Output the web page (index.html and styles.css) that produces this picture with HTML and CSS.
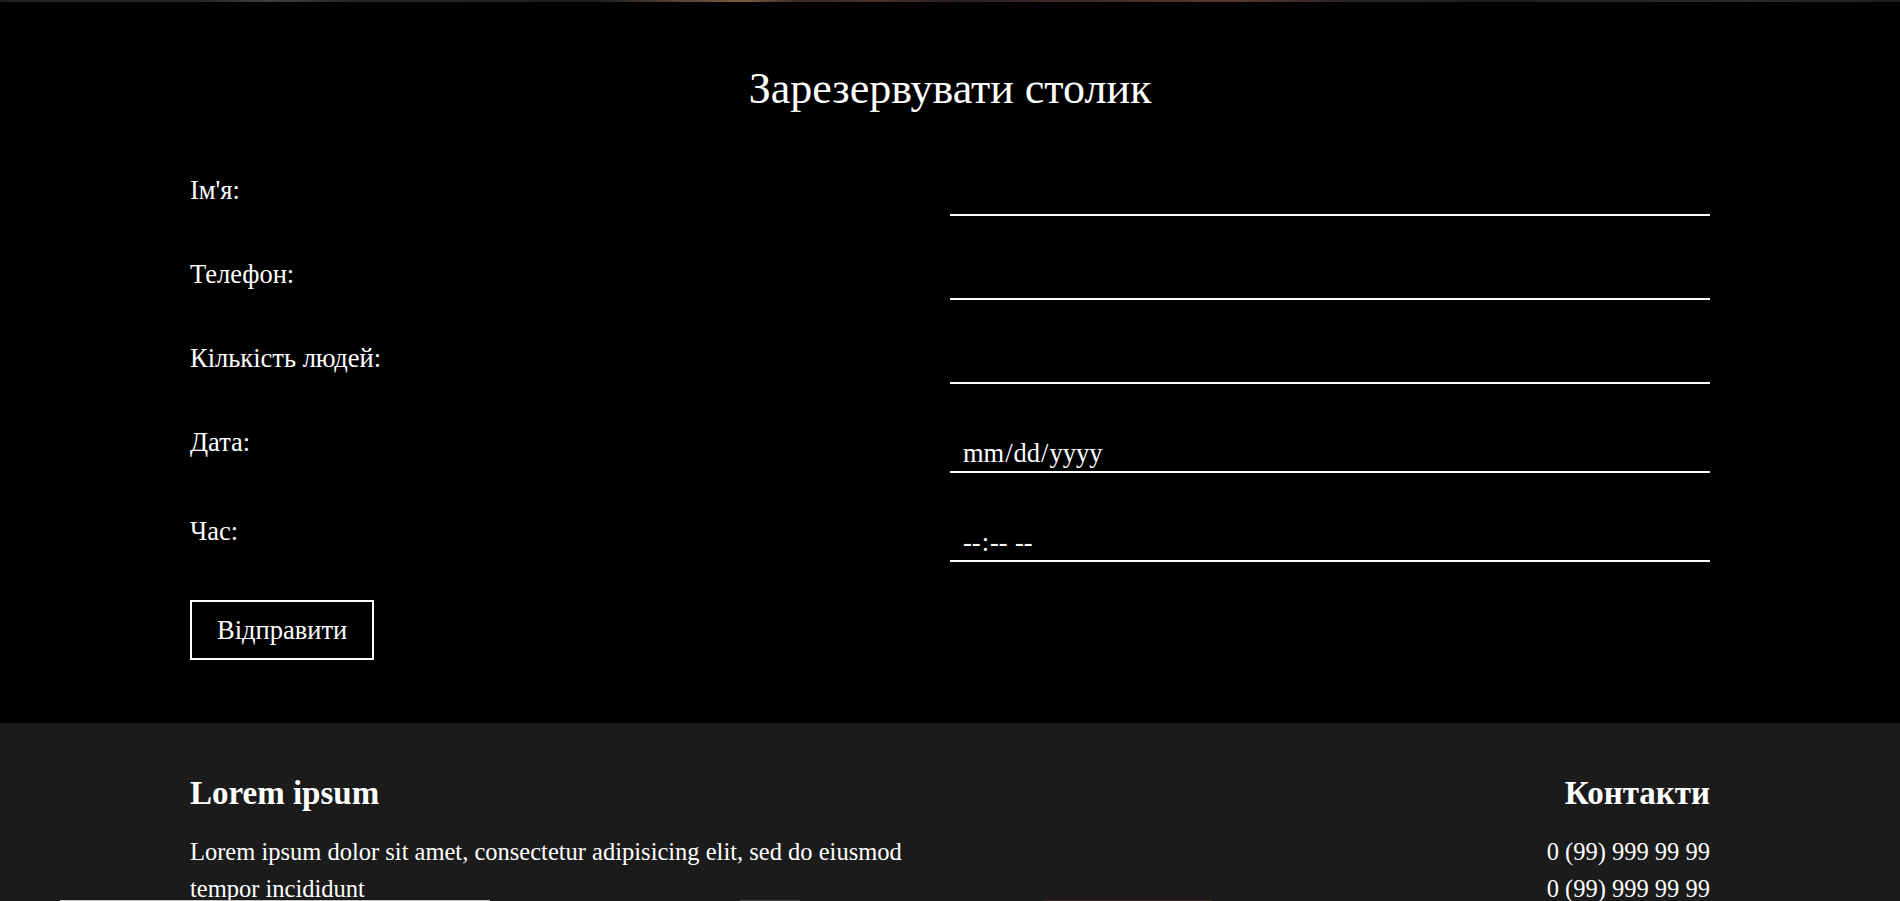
FILE: index.html
```html
<!DOCTYPE html>
<html lang="uk">
<head>
<meta charset="utf-8">
<title>Зарезервувати столик</title>
<link rel="stylesheet" href="styles.css">
</head>
<body>
<div class="hero-edge"></div>
<section class="booking">
  <h1 class="booking__title">Зарезервувати столик</h1>
  <form class="booking__form">
    <div class="field">
      <label class="field__label" for="name">Ім'я:</label>
      <input class="field__input" id="name" type="text">
    </div>
    <div class="field">
      <label class="field__label" for="phone">Телефон:</label>
      <input class="field__input" id="phone" type="tel">
    </div>
    <div class="field">
      <label class="field__label" for="people">Кількість людей:</label>
      <input class="field__input" id="people" type="text">
    </div>
    <div class="field">
      <label class="field__label" for="date">Дата:</label>
      <input class="field__input field__input--dt" id="date" type="date">
    </div>
    <div class="field">
      <label class="field__label" for="time">Час:</label>
      <input class="field__input field__input--dt" id="time" type="time">
    </div>
    <button class="booking__submit" type="submit">Відправити</button>
  </form>
</section>
<footer class="footer">
  <div class="footer__inner">
    <div class="footer__col">
      <h2 class="footer__title">Lorem ipsum</h2>
      <p class="footer__text">Lorem ipsum dolor sit amet, consectetur adipisicing elit, sed do eiusmod tempor incididunt</p>
    </div>
    <div class="footer__col footer__col--right">
      <h2 class="footer__title">Контакти</h2>
      <p class="footer__text">0 (99) 999 99 99</p>
      <p class="footer__text">0 (99) 999 99 99</p>
    </div>
  </div>
</footer>
<div class="edge-bottom"></div>
</body>
</html>
```
FILE: styles.css
```css
* { box-sizing: border-box; }
html, body { margin: 0; padding: 0; }
body {
  background: #000;
  color: #fff;
  font-family: "Liberation Serif", "Times New Roman", serif;
  font-size: 24.5px;
}
.hero-edge {
  height: 2px;
  background: linear-gradient(90deg, #202020 0, #262626 200px, #3d403c 270px, #232323 360px, #1f1f1f 600px, #5a4535 680px, #7a5a40 745px, #3a2a25 800px, #4a3028 880px, #2a2020 950px, #4a3028 1150px, #5a3a30 1230px, #2a2222 1350px, #1e1e22 1500px, #2a2a30 1750px, #1e1e1e 1900px);
}
.booking { padding: 59px 0 63px; }
.booking__title {
  margin: 0;
  text-align: center;
  font-weight: 400;
  font-size: 44px;
  line-height: 56px;
}
.booking__form {
  width: 80%;
  margin: 58px auto 0;
  font-size: 26.5px;
}
.field {
  display: grid;
  grid-template-columns: 1fr 1fr;
  align-items: start;
}
.field + .field { margin-top: 43px; }
.field__label { line-height: 30px; }
.field__input {
  width: 100%;
  height: 41px;
  margin: 0;
  padding: 0 12px;
  background: transparent;
  border: 0;
  border-bottom: 2px solid #fff;
  border-radius: 0;
  color: #fff;
  font: inherit;
  outline: none;
}
.field__input--dt {
  height: 46px;
  padding: 11px 12px 3px;
  line-height: 28px;
}
.field__input--dt::-webkit-calendar-picker-indicator { opacity: 0; }
.booking__submit {
  display: block;
  margin-top: 38px;
  padding: 14px 25px;
  background: transparent;
  border: 2px solid #fff;
  border-radius: 0;
  color: #fff;
  font: inherit;
  line-height: 28px;
}
.footer {
  background: #1b1b1b;
  padding: 51px 0 60px;
}
.footer__inner {
  width: 80%;
  margin: 0 auto;
  display: grid;
  grid-template-columns: 1fr 1fr;
}
.footer__col--right { text-align: right; }
.footer__title {
  margin: 0 0 22px;
  font-size: 33px;
  line-height: 38px;
  font-weight: 700;
}
.footer__text {
  margin: 0;
  line-height: 36.5px;
}
.edge-bottom {
  position: fixed;
  left: 0;
  right: 0;
  bottom: 0;
  height: 1px;
  background: linear-gradient(90deg, transparent 0, transparent 60px, #c4c4c4 60px, #c4c4c4 490px, transparent 490px, transparent 740px, #4e4e4e 740px, #4e4e4e 800px, transparent 800px, transparent 1042px, #3a2a22 1042px, #3a2a22 1212px, transparent 1212px);
}
```
